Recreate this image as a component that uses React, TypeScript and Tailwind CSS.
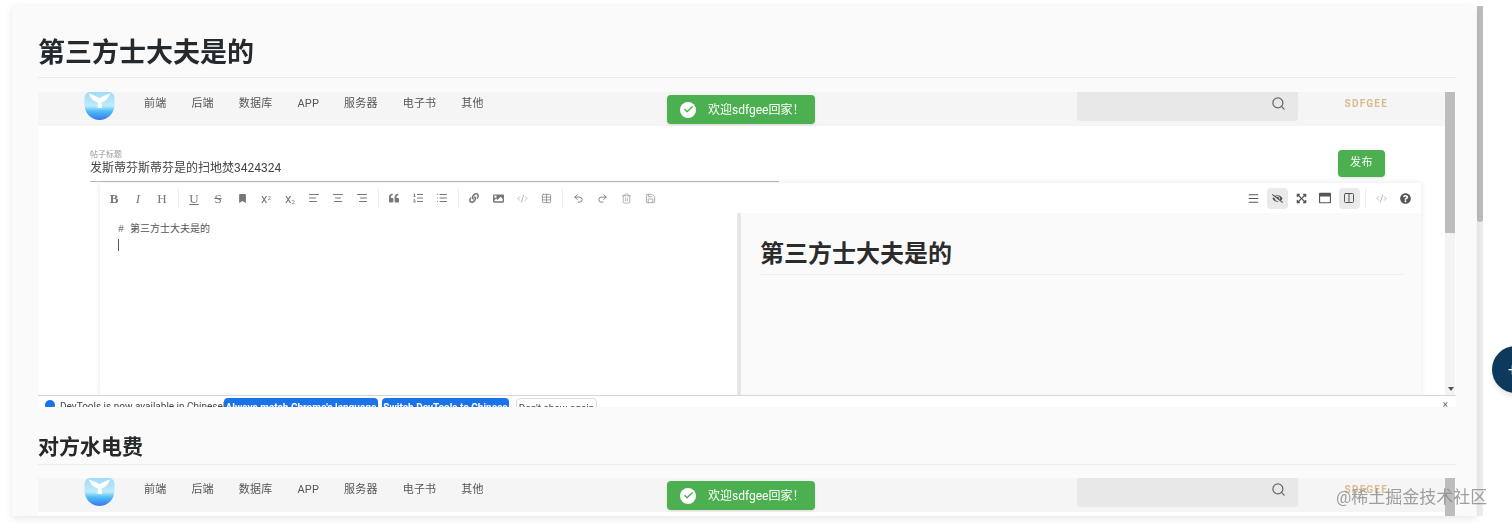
import React from 'react';
import {
  AlignCenter,
  AlignLeft,
  AlignRight,
  Check,
  CodeXml,
  Columns2,
  ListOrdered,
  List,
  Menu,
  Redo2,
  Save,
  Search,
  Table,
  Trash2,
  Undo2,
} from 'lucide-react';
import {
  FaBookmark,
  FaEyeSlash,
  FaExpandArrowsAlt,
  FaImage,
  FaLink,
  FaQuestionCircle,
  FaQuoteLeft,
  FaRegWindowMaximize,
} from 'react-icons/fa';

const navItems = ['前端', '后端', '数据库', 'APP', '服务器', '电子书', '其他'];

const Sep = () => (
  <div className="w-[8px] h-[20px] flex justify-center">
    <div className="w-px h-full bg-[#eeeeee]" />
  </div>
);

const Tool = ({ children, active }: { children: React.ReactNode; active?: boolean }) => (
  <div className="w-[24px] h-[24px] flex items-center justify-center text-[#777777]">
    <div className={`w-[21px] h-[21px] flex items-center justify-center rounded-sm ${active ? 'bg-[#eaeaea]' : ''}`}>
      {children}
    </div>
  </div>
);

const Glyph = ({ children, className }: { children: React.ReactNode; className?: string }) => (
  <span className={`font-['Liberation_Serif',serif] text-[13px] leading-none text-[#777777] ${className ?? ''}`}>
    {children}
  </span>
);

const Logo = () => (
  <svg width="31" height="28" viewBox="0 0 31 28" className="shrink-0">
    <defs>
      <linearGradient id="whale" x1="0" y1="0" x2="0" y2="1">
        <stop offset="0" stopColor="#9fdcf7" />
        <stop offset="0.5" stopColor="#bfe9fb" />
        <stop offset="0.68" stopColor="#4fc0f5" />
        <stop offset="1" stopColor="#3b74ee" />
      </linearGradient>
    </defs>
    <path d="M0.5 6C0.5 3 3 0 6 0H25C28 0 30.5 3 30.5 6V12.5C30.5 21 24 28 15.5 28S0.5 21 0.5 12.5Z" fill="url(#whale)" />
    <path d="M5 1.5C9 3 13 4 15.5 6.5C18 4 22 3 26 1.5C25 6 21 9.5 17.5 10.5L18 16H13.5L14 10.5C10 9.5 6 6 5 1.5Z" fill="#ffffff" />
  </svg>
);

const Toast = () => (
  <div className="absolute left-[629px] top-[3px] w-[148px] h-[29px] bg-[#4caf50] rounded-sm flex items-center pl-[13px] shadow-sm">
    <div className="w-[16px] h-[16px] rounded-full bg-white flex items-center justify-center">
      <Check size={11} strokeWidth={3} className="text-[#4caf50]" />
    </div>
    <span className="ml-[12px] text-[12px] text-white">欢迎sdfgee回家！</span>
  </div>
);

const NavBar = () => (
  <div className="h-[34px] shrink-0 bg-[#f5f5f5] flex items-start pl-[46px]">
    <Logo />
    <div className="flex gap-[25px] ml-[29px] mt-[5px] text-[#555555] text-[11px] leading-[14px] tracking-[0.2px]">
      {navItems.map((item) => (
        <span key={item}>{item}</span>
      ))}
    </div>
    <div className="ml-auto w-[221px] h-[29px] bg-[#e8e8e8] rounded-b-sm flex justify-end pr-[12px] pt-[4px] text-[#666666]">
      <Search size={15} strokeWidth={2} />
    </div>
    <span className="ml-[47px] mr-[57px] mt-[5px] text-[10px] leading-[14px] font-bold tracking-[1.2px] text-[#d8bc8e]">
      SDFGEE
    </span>
  </div>
);

const Toolbar = () => (
  <div className="h-[30px] shrink-0 bg-white flex items-center pl-[2px] pr-[4px]">
    <Tool><Glyph className="font-bold">B</Glyph></Tool>
    <Tool><Glyph className="italic">I</Glyph></Tool>
    <Tool><Glyph>H</Glyph></Tool>
    <Sep />
    <Tool><Glyph className="underline">U</Glyph></Tool>
    <Tool><Glyph className="line-through">S</Glyph></Tool>
    <Tool><FaBookmark size={9} /></Tool>
    <Tool><Glyph className="font-['Roboto',sans-serif] text-[10px]">x<sup className="text-[6px]">2</sup></Glyph></Tool>
    <Tool><Glyph className="font-['Roboto',sans-serif] text-[10px]">x<sub className="text-[6px]">2</sub></Glyph></Tool>
    <Tool><AlignLeft size={12} strokeWidth={2} /></Tool>
    <Tool><AlignCenter size={12} strokeWidth={2} /></Tool>
    <Tool><AlignRight size={12} strokeWidth={2} /></Tool>
    <Sep />
    <Tool><FaQuoteLeft size={10} /></Tool>
    <Tool><ListOrdered size={12} strokeWidth={2} /></Tool>
    <Tool><List size={12} strokeWidth={2} /></Tool>
    <Sep />
    <Tool><FaLink size={10} /></Tool>
    <Tool><FaImage size={11} /></Tool>
    <Tool><CodeXml size={11} strokeWidth={1.5} className="text-[#999999]" /></Tool>
    <Tool><Table size={11} strokeWidth={1.5} /></Tool>
    <Sep />
    <Tool><Undo2 size={11} strokeWidth={2} /></Tool>
    <Tool><Redo2 size={11} strokeWidth={2} /></Tool>
    <Tool><Trash2 size={11} strokeWidth={1.5} className="text-[#999999]" /></Tool>
    <Tool><Save size={11} strokeWidth={1.5} className="text-[#888888]" /></Tool>

    <div className="ml-auto flex items-center">
      <Tool><Menu size={13} strokeWidth={2} className="text-[#555555]" /></Tool>
      <Tool active><FaEyeSlash size={11} className="text-[#555555]" /></Tool>
      <Tool><FaExpandArrowsAlt size={11} className="text-[#555555]" /></Tool>
      <Tool><FaRegWindowMaximize size={12} className="text-[#555555]" /></Tool>
      <Tool active><Columns2 size={12} strokeWidth={2} className="text-[#555555]" /></Tool>
      <Sep />
      <Tool><CodeXml size={11} strokeWidth={1.5} className="text-[#999999]" /></Tool>
      <Tool><FaQuestionCircle size={11} className="text-[#555555]" /></Tool>
    </div>
  </div>
);

const InfoBar = () => (
  <div className="h-[12px] shrink-0 bg-white border-t border-[#d5d5d5] overflow-hidden flex items-start pl-[7px] text-[10px] leading-[14px] relative">
    <div className="w-[10px] h-[10px] mt-[4px] rounded-full bg-[#1a73e8] shrink-0" />
    <span className="ml-[5px] mt-[4px] w-[164px] text-[#444444] whitespace-nowrap overflow-hidden">DevTools is now available in Chinese!</span>
    <div className="w-[154px] h-[20px] mt-[2px] bg-[#1a73e8] rounded-sm text-white text-center font-bold whitespace-nowrap pt-[3px]">Always match Chrome's language</div>
    <div className="w-[127px] h-[20px] mt-[2px] ml-[4px] bg-[#1a73e8] rounded-sm text-white text-center font-bold whitespace-nowrap pt-[3px]">Switch DevTools to Chinese</div>
    <div className="w-[81px] h-[20px] mt-[2px] ml-[7px] bg-white border border-[#dddddd] rounded-sm text-[#444444] text-center whitespace-nowrap pt-[3px]">Don't show again</div>
    <span className="absolute right-[8px] top-[2px] text-[#666666]">×</span>
  </div>
);

const EditorPage = () => (
  <div className="flex-1 min-h-0 flex flex-col bg-white">
    <div className="flex items-start pl-[52px] pr-[60px] pt-[24px]">
      <div className="w-[689px] h-[32px] border-b border-[#bbbbbb]">
        <div className="text-[8px] leading-[10px] text-[#999999]">帖子标题</div>
        <div className="text-[12px] leading-[17px] text-[#444444] whitespace-nowrap">发斯蒂芬斯蒂芬是的扫地焚3424324</div>
      </div>
      <button className="ml-auto w-[47px] h-[27px] rounded-sm bg-[#4caf50] text-white text-[11px] tracking-[0.5px] shadow-sm">发布</button>
    </div>
    <div className="ml-[62px] mr-[24px] mt-px flex-1 min-h-0 flex flex-col shadow-[0_0_6px_rgba(0,0,0,0.1)]">
      <Toolbar />
      <div className="flex-1 min-h-0 flex">
        <div className="w-[637px] bg-white pl-[18px] pt-[8px] text-[#555555]">
          <div className="text-[10px] leading-[14px] font-['Liberation_Mono','Noto_Sans_CJK_SC',monospace]">
            # <span className="font-['Noto_Sans_CJK_SC',sans-serif]">第三方士大夫是的</span>
          </div>
          <div className="w-px h-[12px] mt-[2px] bg-[#555555]" />
        </div>
        <div className="w-[4px] bg-[#e6e6e6]" />
        <div className="flex-1 bg-[#fafafa] pl-[19px] pr-[18px] pt-[26px]">
          <div className="h-[36px] border-b border-[#eeeeee] text-[24px] leading-[30px] font-bold text-[#2b2b2b]">第三方士大夫是的</div>
        </div>
      </div>
    </div>
  </div>
);

const Scrollbar = () => (
  <div className="w-[10px] mr-px shrink-0 bg-[#f3f3f3] flex flex-col relative">
    <div className="h-[141px] bg-[#bdbdbd]" />
    <div className="absolute bottom-[4px] left-[3px] w-0 h-0 border-x-[3px] border-x-transparent border-t-[4px] border-t-[#555555]" />
  </div>
);

const Screenshot = ({ full }: { full?: boolean }) => (
  <div className={`relative flex flex-col bg-white overflow-hidden ${full ? 'h-[315px]' : 'h-[303px]'}`}>
    <div className="flex-1 min-h-0 flex">
      <div className="flex-1 min-w-0 flex flex-col">
        <NavBar />
        <EditorPage />
      </div>
      <Scrollbar />
    </div>
    {full && <InfoBar />}
    <Toast />
  </div>
);

export default function App() {
  return (
    <div className="h-[523px] w-[1512px] overflow-hidden relative bg-white flex items-start pt-[6px] pl-[12px] font-[Roboto,'Noto_Sans_CJK_SC',sans-serif]">
      <div className="w-[1464px] h-[510px] overflow-hidden bg-[#fafafa] shadow-[0_2px_8px_rgba(0,0,0,0.1)] pl-[26px] pr-[20px] pt-[32px] blur-[0.35px]">
        <h1 className="text-[27px] leading-[30px] font-bold text-[#24292e] pb-[9px] border-b border-[#eaeaea] mb-[14px]">第三方士大夫是的</h1>
        <Screenshot full />
        <h2 className="mt-[28px] text-[21px] leading-[24px] font-bold text-[#24292e] pb-[5px] border-b border-[#eeeeee] mb-[13px]">对方水电费</h2>
        <Screenshot />
      </div>
      <div className="ml-px w-[6px] h-[510px] bg-[#eeeeee]">
        <div className="h-[216px] bg-[#bdbdbd] rounded-b-sm" />
      </div>

      {/* floating button, cut off by the window edge */}
      <div className="absolute left-[1492px] top-[346px] w-[47px] h-[47px] rounded-full bg-[#0d3a5c] shadow-md flex items-center pl-[16px] text-white text-[16px]">+</div>

      {/* site watermark */}
      <span className="absolute left-[1336px] top-[486px] text-[17px] leading-[22px] text-[#888888]/80 whitespace-nowrap">@稀土掘金技术社区</span>
    </div>
  );
}
